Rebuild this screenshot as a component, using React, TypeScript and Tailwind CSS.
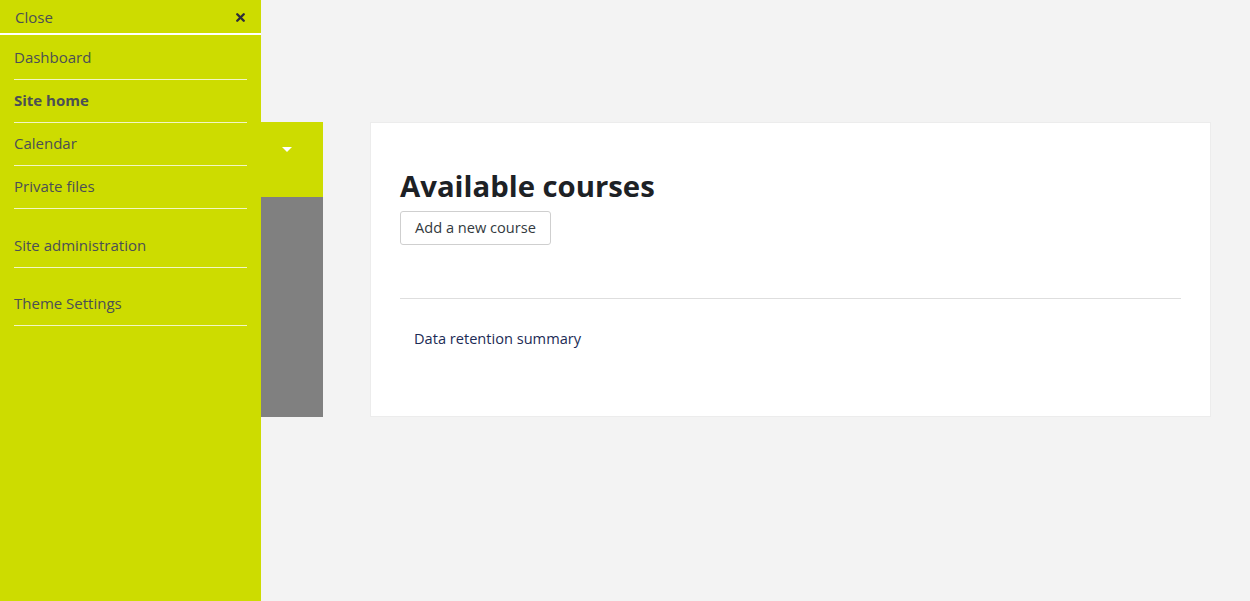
import { X } from "lucide-react";

const items = [
  { label: "Dashboard", bold: false, h: "h-[45px]" },
  { label: "Site home", bold: true, h: "h-[43px]" },
  { label: "Calendar", bold: false, h: "h-[43px]" },
  { label: "Private files", bold: false, h: "h-[43px]" },
  { label: "Site administration", bold: false, h: "h-[59px]" },
  { label: "Theme Settings", bold: false, h: "h-[58px]" },
];

function Drawer() {
  return (
    <aside className="absolute left-0 top-0 z-10 h-[601px] w-[261px] bg-[#cddc00] text-[15px] text-[#4b4f55]">
      <div className="flex h-[35px] items-center justify-between border-b-2 border-white pl-[15px] pr-[14px] pt-[1px]">
        <span>Close</span>
        <X size={13} strokeWidth={4.5} className="text-[#2e2e3a]" />
      </div>
      <ul className="mx-[14px]">
        {items.map((item) => (
          <li
            key={item.label}
            className={`flex ${item.h} items-end border-b border-[#f2f6c4] pb-[12px] leading-[20px] ${item.bold ? "font-bold" : ""}`}
          >
            {item.label}
          </li>
        ))}
      </ul>
    </aside>
  );
}

export default function App() {
  return (
    <div className="relative min-h-[601px] overflow-hidden bg-[#f3f3f3] font-['Open_Sans',sans-serif]">
      <Drawer />
      <main className="flex pt-[122px]">
        <div className="w-[323px] shrink-0">
          <div className="flex h-[75px] items-start justify-end bg-[#cddc00] pr-[31px] pt-[25px]">
            <span className="h-0 w-0 border-x-[5px] border-t-[5px] border-x-transparent border-t-white" />
          </div>
          <div className="h-[220px] bg-[#808080]" />
        </div>
        <section className="ml-[47px] h-[295px] w-[841px] border border-[#ececec] bg-white px-[29px] pt-[44px]">
          <h2 className="text-[29.3px] font-bold leading-[38px] text-[#1d2125]">Available courses</h2>
          <button className="mt-[6px] h-[34px] rounded-[3px] border border-[#cfcfcf] px-[14px] text-[14.6px] text-[#333a40]">
            Add a new course
          </button>
          <hr className="mt-[53px] border-[#dedede]" />
          <p className="ml-[14px] mt-[29px] text-[14.6px] text-[#1c2b55]">Data retention summary</p>
        </section>
      </main>
    </div>
  );
}
